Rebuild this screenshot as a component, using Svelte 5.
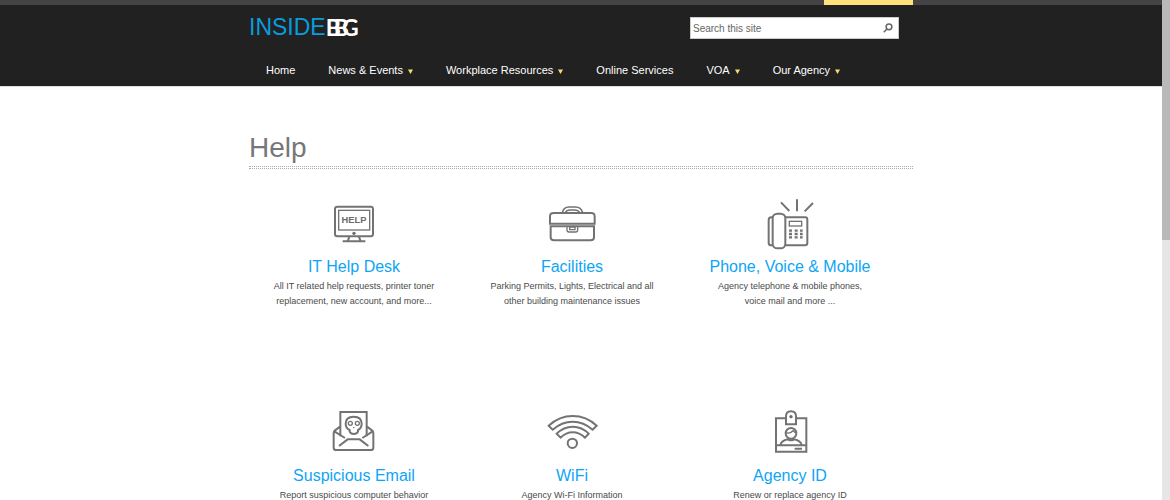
<script lang="ts">
  type NavItem = { label: string; menu?: boolean };
  type Card = { icon: string; title: string; text: string };

  const nav: NavItem[] = [
    { label: "Home" },
    { label: "News & Events", menu: true },
    { label: "Workplace Resources", menu: true },
    { label: "Online Services" },
    { label: "VOA", menu: true },
    { label: "Our Agency", menu: true }
  ];

  const cards: Card[] = [
    {
      icon: "desk",
      title: "IT Help Desk",
      text: "All IT related help requests, printer toner replacement, new account, and more..."
    },
    {
      icon: "case",
      title: "Facilities",
      text: "Parking Permits, Lights, Electrical and all other building maintenance issues"
    },
    {
      icon: "phone",
      title: "Phone, Voice & Mobile",
      text: "Agency telephone & mobile phones, voice mail and more ..."
    },
    { icon: "mail", title: "Suspicious Email", text: "Report suspicious computer behavior" },
    { icon: "wifi", title: "WiFi", text: "Agency Wi-Fi Information" },
    { icon: "badge", title: "Agency ID", text: "Renew or replace agency ID" }
  ];

  let query = $state("");
</script>

<div class="shell">
  <div class="page">
    <div class="ribbon">
      <div class="wrap"><span class="ribbon-tab"></span></div>
    </div>

    <header>
      <div class="wrap">
        <div class="brand-row">
          <a class="logo" href="#home" aria-label="Inside BBG">
            <span class="inside">INSIDE</span>
            <span class="bbg"><span>B</span><span>B</span><span>G</span></span>
          </a>
          <form class="search" role="search" onsubmit={(e) => e.preventDefault()}>
            <input type="text" placeholder="Search this site" aria-label="Search this site" bind:value={query} />
            <button type="submit" aria-label="Search">
              <svg viewBox="0 0 10 10" width="10" height="10">
                <circle cx="6" cy="3.8" r="2.9" />
                <path d="M3.9 6 L0.8 9.2" />
              </svg>
            </button>
          </form>
        </div>

        <nav>
          {#each nav as item}
            <a href="#nav">
              {item.label}
              {#if item.menu}
                <svg class="caret" viewBox="0 0 5 5" width="5" height="5"><path d="M0 0.5 H5 L2.5 5 Z" /></svg>
              {/if}
            </a>
          {/each}
        </nav>
      </div>
    </header>

    <main class="wrap">
      <h1>Help</h1>
      <div class="rule"></div>

      <div class="cards">
        {#each cards as card}
          <section class="card">
            <svg class="icon" viewBox="-1 0 210 165" width="70" height="55" aria-hidden="true">
              {#if card.icon === "desk"}
                <rect x="47" y="35" width="114" height="89" rx="7" />
                <rect x="58" y="46" width="93" height="59" stroke-width="4" />
                <text x="104" y="85" text-anchor="middle">HELP</text>
                <circle class="solid" cx="104" cy="115" r="5" />
                <path d="M90 125 L86 137 M119 125 L123 137 M70 139 H138" />
              {:else if card.icon === "case"}
                <path d="M38 86 V64 Q38 54 49 54 H161 Q172 54 172 64 V86 Z" />
                <path d="M75 53 Q79 36 95 36 H115 Q131 36 136 53 M84 53 Q88 45 98 45 H113 Q122 45 127 53" stroke-width="5" />
                <path d="M40 94 H170 V127 Q170 136 160 136 H50 Q40 136 40 127 Z" />
                <path d="M89 94 V105 Q89 111 95 111 H115 Q121 111 121 105 V94 M97 96 H113 V104 H97 Z" stroke-width="4" />
              {:else if card.icon === "phone"}
                <path d="M52 67 H48 Q40 67 40 76 V143 Q40 151 48 151 H53 M90 67 H150 Q156 67 156 74 V144 Q156 151 149 151 H91" />
                <rect x="52" y="56" width="38" height="104" rx="14" />
                <rect x="102" y="79" width="37" height="14" stroke-width="4" />
                <path d="M77 22 L102 48 M125 13 V49 M173 24 L148 49" />
                <path
                  d="M101 107 H110 M118 107 H127 M134 107 H142 M101 117 H110 M118 117 H127 M134 117 H142 M101 127 H110 M118 127 H127 M134 127 H142"
                  stroke-width="7"
                />
              {:else if card.icon === "mail"}
                <path d="M63 97 V24 H142 V97 M62 68 L47 79 Q43 82 43 88 V131 Q43 138 51 138 H154 Q162 138 162 131 V88 Q162 82 158 79 L143 68" />
                <path d="M45 82 L77 102 M160 82 L129 102 M59 126 L85 106 H121 L147 126" />
                <path d="M91 78 Q79 72 79 59 Q79 38 103 38 Q127 38 127 59 Q127 72 116 78 V83 Q113 90 103 90 Q94 90 91 83 Z" />
                <circle cx="93" cy="58" r="6" stroke-width="4" />
                <circle cx="114" cy="58" r="6" stroke-width="4" />
                <path d="M103 69 V73" stroke-width="4" />
              {:else if card.icon === "wifi"}
                <path d="M34 65 Q66 36 106 36 Q147 36 178 65 L166 77 Q139 53 106 53 Q73 53 46 77 Z" />
                <path d="M58 89 Q79 68 106 68 Q134 68 154 89 L143 101 Q126 85 106 85 Q86 85 70 101 Z" />
                <circle cx="105" cy="118" r="14" />
              {:else if card.icon === "badge"}
                <path d="M91 43 H62 V143 H153 V43 H123 M62 124 H153" />
                <path d="M92 61 V37 Q92 22 107 22 Q122 22 122 37 V61 Z" />
                <circle class="solid" cx="107" cy="38" r="5" />
                <circle cx="107" cy="88" r="16" />
                <path d="M91 86 Q106 90 113 80 Q117 86 123 86" stroke-width="4" />
                <path d="M75 124 Q77 110 98 106 Q107 112 116 106 Q137 110 139 124 M118 134 H140" />
              {/if}
            </svg>
            <h2><a href="#topic">{card.title}</a></h2>
            <p>{card.text}</p>
          </section>
        {/each}
      </div>
    </main>
  </div>

  <div class="scrollbar"><div class="thumb"></div></div>
</div>

<style>
  :global(body) {
    margin: 0;
    background: #fff;
  }

  .shell {
    display: flex;
    height: 100vh;
    overflow: hidden;
    font-family: "Liberation Sans", Arial, sans-serif;
  }

  .page {
    flex: 1;
    min-width: 0;
    overflow: hidden;
  }

  .scrollbar {
    width: 8px;
    background: #e6e6e6;
  }

  .thumb {
    height: 48%;
    background: #b9b9b9;
  }

  .wrap {
    max-width: 664px;
    margin: 0 auto;
  }

  .ribbon {
    background: #444;
  }

  .ribbon .wrap {
    display: flex;
    justify-content: flex-end;
    height: 5px;
  }

  .ribbon-tab {
    width: 89px;
    background: #ffe27c;
  }

  header {
    background: #212121;
    border-bottom: 1px solid #ddd;
  }

  .brand-row {
    display: flex;
    justify-content: space-between;
    padding: 12px 14px 0 0;
  }

  .logo {
    display: flex;
    height: 21px;
    line-height: 21px;
    font-size: 23px;
    text-decoration: none;
  }

  .inside {
    color: #0a9bdc;
  }

  .bbg {
    display: flex;
    color: #fff;
    font-family: Lato, "Liberation Sans", sans-serif;
    font-weight: 700;
  }

  /* the three letters of the mark overlap */
  .bbg span + span {
    margin-left: -7px;
  }

  .search {
    display: flex;
    align-items: center;
    box-sizing: border-box;
    width: 209px;
    height: 22px;
    background: #fff;
    border: 1px solid #ccc;
  }

  .search input {
    flex: 1;
    min-width: 0;
    padding: 1px 2px 0;
    border: 0;
    outline: 0;
    background: none;
    font-family: inherit;
    font-size: 10px;
    color: #444;
  }

  .search input::placeholder {
    color: #666;
    opacity: 1;
  }

  .search button {
    display: flex;
    padding: 0 5px 1px;
    border: 0;
    background: none;
    cursor: pointer;
  }

  .search svg {
    fill: none;
    stroke: #666;
    stroke-width: 1.5;
  }

  nav {
    display: flex;
    gap: 33px;
    padding: 23px 17px 8px;
  }

  nav a {
    display: flex;
    align-items: center;
    gap: 5px;
    font-size: 11px;
    line-height: 16px;
    color: #fff;
    text-decoration: none;
    white-space: nowrap;
  }

  .caret {
    margin-top: 3px;
    fill: #f5dc6e;
  }

  h1 {
    margin: 0;
    padding-top: 45px;
    font-size: 28px;
    font-weight: 400;
    line-height: 32px;
    color: #777;
  }

  .rule {
    height: 1px;
    margin-top: 2px;
    border-top: 1px dotted #aaa;
    border-bottom: 1px dotted #aaa;
  }

  .cards {
    display: grid;
    grid-template-columns: repeat(3, 178px);
    column-gap: 40px;
    row-gap: 95px;
    padding: 26px 16px 0;
  }

  .card {
    display: flex;
    flex-direction: column;
    align-items: center;
    text-align: center;
  }

  .icon {
    fill: none;
    stroke: #737373;
    stroke-width: 6;
  }

  .icon .solid {
    fill: #6b6b6b;
    stroke: none;
  }

  .icon text {
    fill: #6b6b6b;
    stroke: none;
    font-size: 28px;
    font-weight: 700;
  }

  h2 {
    margin: 7px 0 2px;
    font-size: 16px;
    font-weight: 400;
    line-height: 20px;
    white-space: nowrap;
  }

  h2 a {
    color: #0ea5f5;
    text-decoration: none;
  }

  p {
    max-width: 166px;
    margin: 0;
    font-size: 9px;
    line-height: 15px;
    color: #4a4a4a;
  }
</style>
